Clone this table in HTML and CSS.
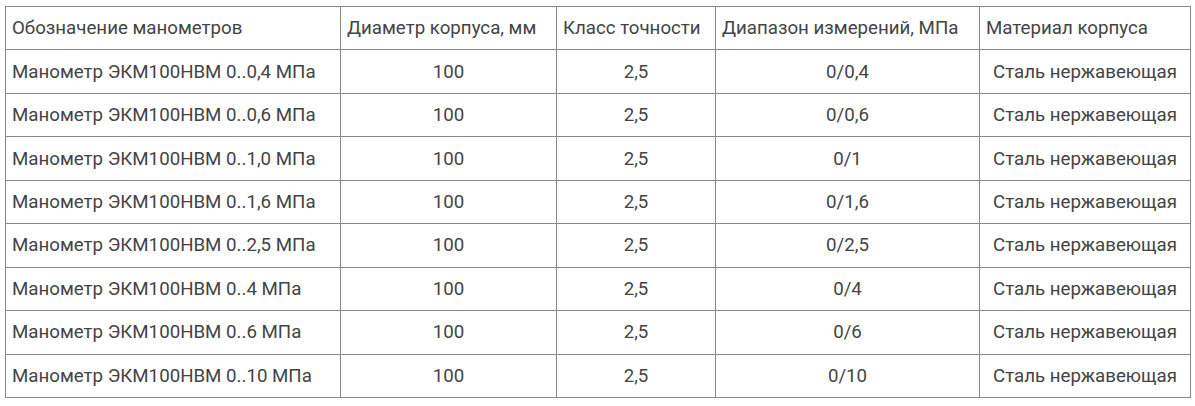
FILE: index.html
```html
<!DOCTYPE html>
<html lang="ru">
<head>
<meta charset="utf-8">
<link rel="stylesheet" href="styles.css">
</head>
<body>
<table class="specs">
  <colgroup>
    <col class="c1"><col class="c2"><col class="c3"><col class="c4"><col class="c5">
  </colgroup>
  <thead>
    <tr><th>Обозначение манометров</th><th>Диаметр корпуса, мм</th><th>Класс точности</th><th>Диапазон измерений, МПа</th><th>Материал корпуса</th></tr>
  </thead>
  <tbody>
    <tr><td class="name">Манометр ЭКМ100НВМ 0..0,4 МПа</td><td>100</td><td>2,5</td><td>0/0,4</td><td>Сталь нержавеющая</td></tr>
    <tr><td class="name">Манометр ЭКМ100НВМ 0..0,6 МПа</td><td>100</td><td>2,5</td><td>0/0,6</td><td>Сталь нержавеющая</td></tr>
    <tr><td class="name">Манометр ЭКМ100НВМ 0..1,0 МПа</td><td>100</td><td>2,5</td><td>0/1</td><td>Сталь нержавеющая</td></tr>
    <tr><td class="name">Манометр ЭКМ100НВМ 0..1,6 МПа</td><td>100</td><td>2,5</td><td>0/1,6</td><td>Сталь нержавеющая</td></tr>
    <tr><td class="name">Манометр ЭКМ100НВМ 0..2,5 МПа</td><td>100</td><td>2,5</td><td>0/2,5</td><td>Сталь нержавеющая</td></tr>
    <tr><td class="name">Манометр ЭКМ100НВМ 0..4 МПа</td><td>100</td><td>2,5</td><td>0/4</td><td>Сталь нержавеющая</td></tr>
    <tr><td class="name">Манометр ЭКМ100НВМ 0..6 МПа</td><td>100</td><td>2,5</td><td>0/6</td><td>Сталь нержавеющая</td></tr>
    <tr><td class="name">Манометр ЭКМ100НВМ 0..10 МПа</td><td>100</td><td>2,5</td><td>0/10</td><td>Сталь нержавеющая</td></tr>
  </tbody>
</table>
</body>
</html>
```
FILE: styles.css
```css
html, body {
  margin: 0;
  padding: 0;
  background: #fff;
}
body {
  padding: 6px 0 0 5px;
  font-family: Roboto, "Liberation Sans", sans-serif;
  font-size: 18.7px;
  color: #444;
}
.specs {
  border-collapse: collapse;
  table-layout: fixed;
  width: 1185px;
}
.c1 { width: 335px; }
.c2 { width: 216px; }
.c3 { width: 159px; }
.c4 { width: 264px; }
.c5 { width: 211px; }
.specs th,
.specs td {
  border: 1px solid #888;
  height: 43.44px;
  padding: 0 6px;
  box-sizing: border-box;
  line-height: 22px;
  vertical-align: middle;
  white-space: nowrap;
  overflow: hidden;
}
.specs th {
  font-weight: 400;
  text-align: left;
}
.specs td {
  text-align: center;
}
.specs td.name {
  text-align: left;
}
```
